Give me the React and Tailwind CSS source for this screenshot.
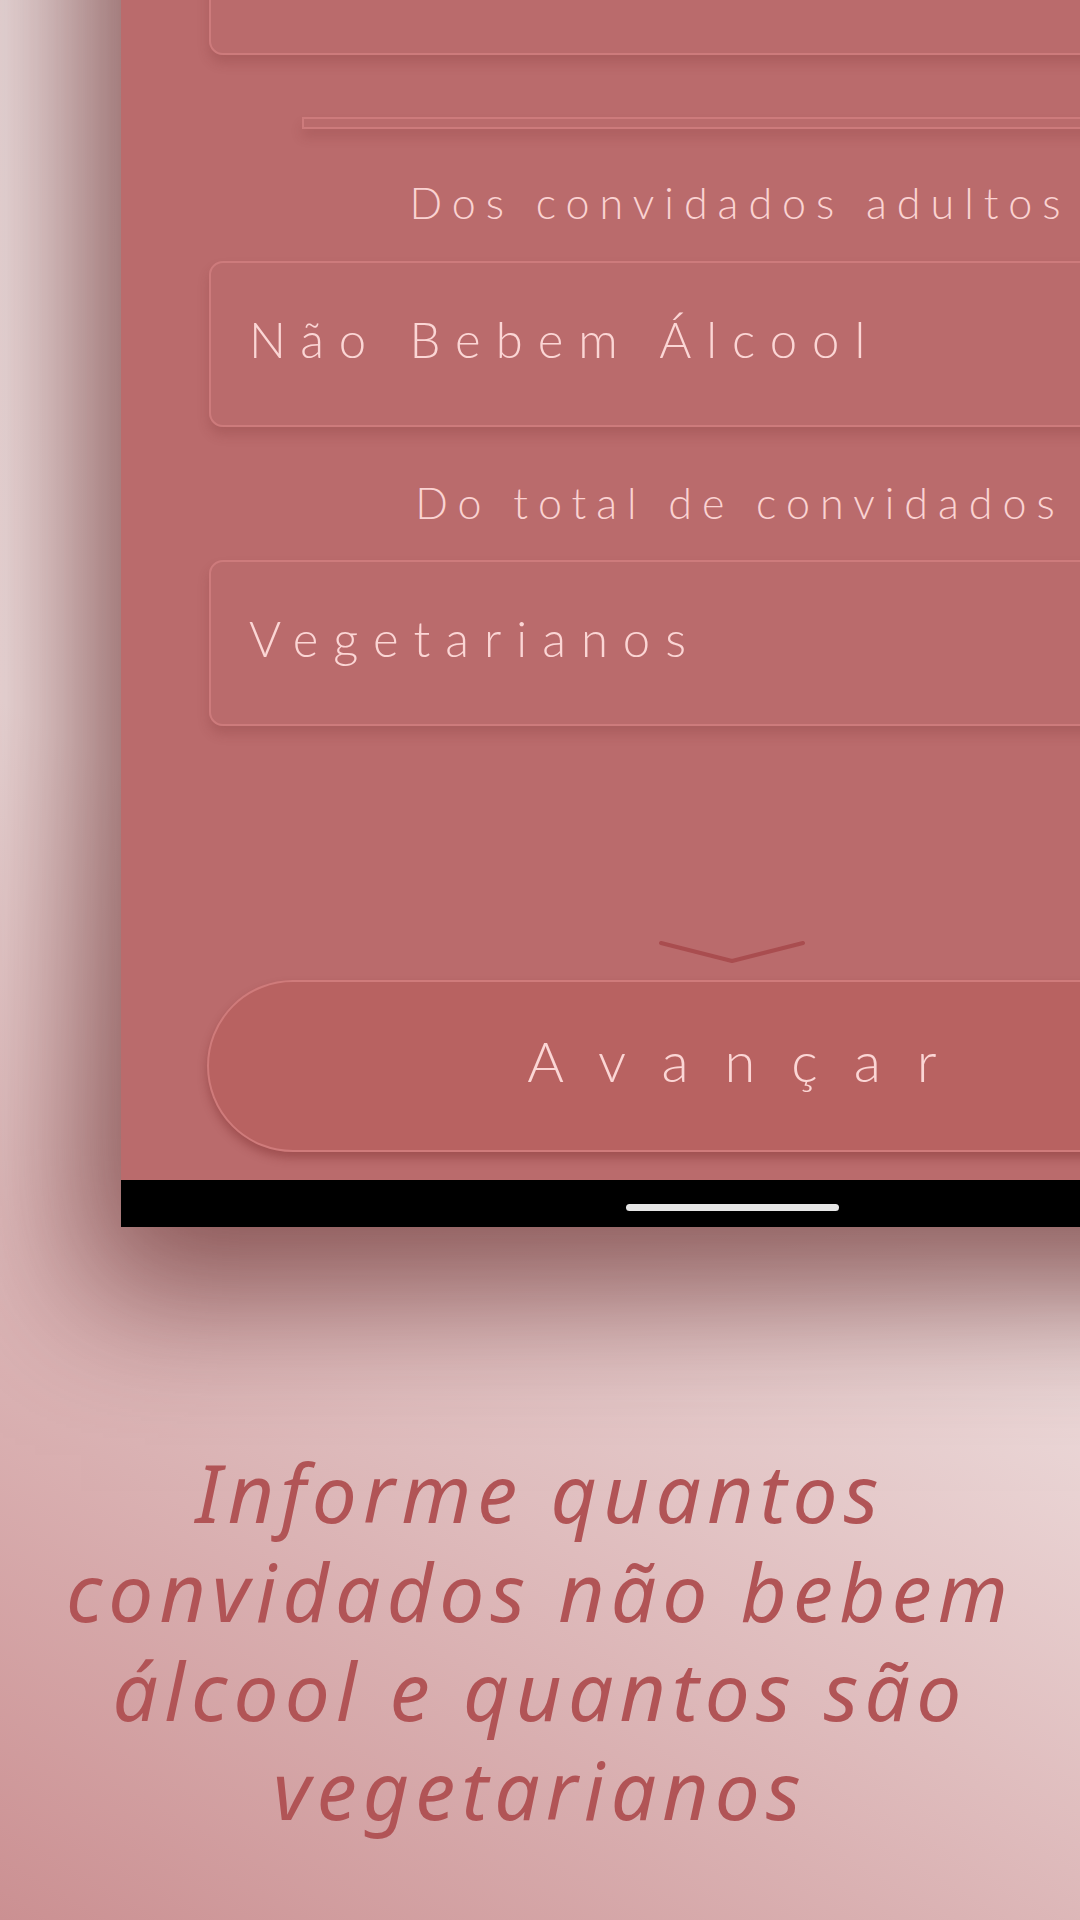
import React from "react";

const labelCls =
  "text-[43px] leading-[43px] font-light tracking-[10px] text-[#fad3d2] pl-[16px]";
const fieldCls =
  "w-[1046px] h-[166px] rounded-[14px] border-2 border-[#cd7b7c] shadow-[0_8px_12px_rgba(120,45,45,0.22)] flex items-center pl-[38px] pb-[10px]";

const Field = ({ text, className = "" }) => (
  <div className={`${fieldCls} ${className}`}>
    <span className="text-[49px] leading-[49px] font-light tracking-[15px] text-[#fbd6d5]">
      {text}
    </span>
  </div>
);

export default function App() {
  return (
    <div
      className="relative w-[1080px] h-[1920px] overflow-hidden bg-[linear-gradient(30deg,#cb9092_0%,#eedddd_48%,#e6dadb_100%)]"
      style={{ fontFamily: "Lato, 'Open Sans', sans-serif" }}
    >
      {/* phone screen */}
      <div className="ml-[121px] -mt-[200px] pt-[200px] w-[1222px] bg-[#ba6b6c] shadow-[0_30px_130px_40px_rgba(90,25,25,0.66)] flex flex-col items-center">
        <div className={`${fieldCls} -mt-[111px]`} />

        <div className="mt-[62px] w-[860px] h-[12px] border-2 border-[#cd7b7c] shadow-[0_8px_12px_rgba(120,45,45,0.2)]" />

        <p className={`mt-[52px] ${labelCls}`}>Dos convidados adultos</p>
        <Field text="Não Bebem Álcool" className="mt-[37px]" />

        <p className={`mt-[54px] ${labelCls}`}>Do total de convidados</p>
        <Field text="Vegetarianos" className="mt-[36px]" />

        <svg
          className="mt-[213px]"
          width="150"
          height="26"
          viewBox="0 0 150 26"
          fill="none"
        >
          <polyline
            points="4,4 75,22 146,4"
            stroke="#a94d4f"
            strokeWidth="4"
            strokeLinecap="round"
            strokeLinejoin="round"
          />
        </svg>

        <button className="mt-[15px] w-[1050px] h-[172px] rounded-full bg-[#b86261] border-2 border-[#cf7b7b] shadow-[0_6px_10px_rgba(110,30,30,0.35)] flex items-center justify-center pb-[10px]">
          <span className="pl-[36px] text-[56px] leading-[56px] font-light tracking-[36px] text-[#fbd6d5]">
            Avançar
          </span>
        </button>

        <div className="mt-[28px] w-full h-[47px] bg-black flex justify-center pt-[24px]">
          <div className="w-[213px] h-[7px] rounded-full bg-[#e6e6e6]" />
        </div>
      </div>

      {/* caption */}
      <p
        className="mt-[215px] text-center italic text-[80px] leading-[99px] tracking-[6.2px] text-[#b15456]"
        style={{ fontFamily: "'Noto Sans', 'Open Sans', sans-serif" }}
      >
        Informe quantos
        <br />
        convidados não bebem
        <br />
        álcool e quantos são
        <br />
        vegetarianos
      </p>
    </div>
  );
}
